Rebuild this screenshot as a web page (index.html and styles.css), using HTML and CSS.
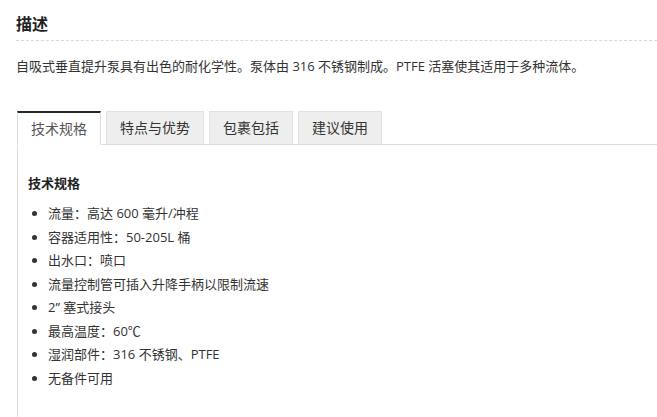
FILE: index.html
```html
<!DOCTYPE html>
<html lang="zh-CN">
<head>
<meta charset="utf-8">
<title>描述</title>
<link rel="stylesheet" href="styles.css">
</head>
<body>
<section class="desc">
  <h2 class="desc-title">描述</h2>
  <p class="desc-text">自吸式垂直提升泵具有出色的耐化学性。泵体由 316 不锈钢制成。PTFE 活塞使其适用于多种流体。</p>
</section>
<section class="tabs">
  <ul class="tab-list">
    <li class="tab active">技术规格</li>
    <li class="tab">特点与优势</li>
    <li class="tab">包裹包括</li>
    <li class="tab">建议使用</li>
  </ul>
  <div class="panel">
    <h3 class="panel-title">技术规格</h3>
    <ul class="spec-list">
      <li>流量：高达 600 毫升/冲程</li>
      <li>容器适用性：50-205L 桶</li>
      <li>出水口：喷口</li>
      <li>流量控制管可插入升降手柄以限制流速</li>
      <li>2” 塞式接头</li>
      <li>最高温度：60℃</li>
      <li>湿润部件：316 不锈钢、PTFE</li>
      <li>无备件可用</li>
    </ul>
  </div>
</section>
</body>
</html>
```
FILE: styles.css
```css
* { box-sizing: border-box; }
html, body { height: 100%; }
body {
  margin: 0;
  padding: 12px 0 0 16px;
  font-family: "Open Sans", "Noto Sans CJK SC", sans-serif;
  color: #333;
  background: #fff;
  display: flex;
  flex-direction: column;
}
.desc-title {
  margin: 0;
  font-size: 16px;
  font-weight: 700;
  color: #222;
  line-height: 24px;
  padding-bottom: 4px;
  border-bottom: 1px dashed #d9d9d9;
}
.desc-text {
  margin: 15px 0 0;
  font-size: 13px;
  line-height: 20px;
  color: #333;
}
.tabs {
  margin: 35px 0 0 1px;
  flex: 1;
  display: flex;
  flex-direction: column;
}
.tab-list {
  list-style: none;
  margin: 0;
  padding: 0;
  display: flex;
  gap: 5px;
  border-bottom: 1px solid #ddd;
}
.tab {
  height: 34px;
  margin-bottom: -1px;
  padding: 0 13px;
  font-size: 14px;
  line-height: 32px;
  color: #333;
  background: #eee;
  border: 1px solid #e2e2e2;
  border-bottom-color: #ddd;
}
.tab.active {
  background: #fff;
  color: #555;
  border-top: 2px solid #1d2b2b;
  border-left-color: #ddd;
  border-right-color: #ddd;
  border-bottom-color: #fff;
  line-height: 31px;
}
.panel {
  flex: 1;
  border-left: 1px solid #ddd;
  padding: 28px 0 0 10px;
}
.panel-title {
  margin: 0 0 9px;
  font-size: 13px;
  font-weight: 700;
  color: #222;
  line-height: 20px;
}
.spec-list {
  margin: 0;
  padding-left: 20px;
  font-size: 13px;
  color: #333;
}
.spec-list li {
  line-height: 23.5px;
}
```
